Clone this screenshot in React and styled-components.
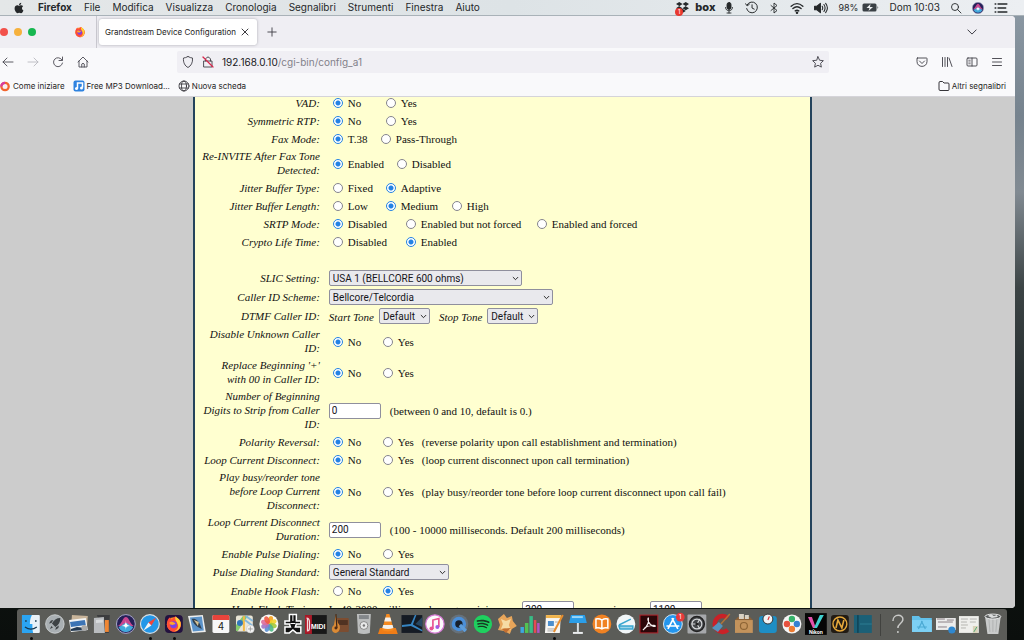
import React from "react";
import styled, { createGlobalStyle } from "styled-components";
import { FaApple, FaDropbox, FaSpotify } from "react-icons/fa";

const ui = `Inter, Roboto, "Liberation Sans", sans-serif`;
const control = `Roboto, "Liberation Sans", sans-serif`;
const serif = `"Liberation Serif", "Times New Roman", serif`;

const menus = [
  "File",
  "Modifica",
  "Visualizza",
  "Cronologia",
  "Segnalibri",
  "Strumenti",
  "Finestra",
  "Aiuto"
];

// a radio option is [label, width of its slot]
const rows = [
  { label: "VAD:", options: [["No", 53], ["Yes"]], on: 0 },
  { label: "Symmetric RTP:", options: [["No", 53], ["Yes"]], on: 0 },
  { label: "Fax Mode:", options: [["T.38", 48], ["Pass-Through"]], on: 0 },
  {
    label: "Re-INVITE After Fax Tone Detected:",
    options: [["Enabled", 64], ["Disabled"]],
    on: 0
  },
  { label: "Jitter Buffer Type:", options: [["Fixed", 53], ["Adaptive"]], on: 1 },
  {
    label: "Jitter Buffer Length:",
    options: [["Low", 53], ["Medium", 66], ["High"]],
    on: 1
  },
  {
    label: "SRTP Mode:",
    options: [
      ["Disabled", 73],
      ["Enabled but not forced", 131],
      ["Enabled and forced"]
    ],
    on: 0
  },
  { label: "Crypto Life Time:", options: [["Disabled", 73], ["Enabled"]], on: 1 },
  { blank: true },
  { label: "SLIC Setting:", select: "USA 1 (BELLCORE 600 ohms)", width: 193 },
  { label: "Caller ID Scheme:", select: "Bellcore/Telcordia", width: 224 },
  { label: "DTMF Caller ID:", tones: ["Start Tone", "Stop Tone"] },
  { label: "Disable Unknown Caller\nID:", options: [["No", 50], ["Yes"]], on: 0 },
  {
    label: "Replace Beginning '+'\nwith 00 in Caller ID:",
    options: [["No", 50], ["Yes"]],
    on: 0
  },
  {
    label: "Number of Beginning\nDigits to Strip from Caller\nID:",
    input: "0",
    note: "(between 0 and 10, default is 0.)"
  },
  {
    label: "Polarity Reversal:",
    options: [["No", 50], ["Yes", 39]],
    on: 0,
    note: "(reverse polarity upon call establishment and termination)"
  },
  {
    label: "Loop Current Disconnect:",
    options: [["No", 50], ["Yes", 39]],
    on: 0,
    note: "(loop current disconnect upon call termination)"
  },
  {
    label: "Play busy/reorder tone\nbefore Loop Current\nDisconnect:",
    options: [["No", 50], ["Yes", 39]],
    on: 0,
    note: "(play busy/reorder tone before loop current disconnect upon call fail)"
  },
  {
    label: "Loop Current Disconnect\nDuration:",
    input: "200",
    note: "(100 - 10000 milliseconds. Default 200 milliseconds)"
  },
  { label: "Enable Pulse Dialing:", options: [["No", 50], ["Yes"]], on: 0 },
  { label: "Pulse Dialing Standard:", select: "General Standard", width: 120 },
  { label: "Enable Hook Flash:", options: [["No", 50], ["Yes"]], on: 1 },
  { label: "Hook Flash Timing:", timing: true }
];

const Line = ({ size = 12, w = 1.8, children, ...rest }) => (
  <svg
    width={size}
    height={size}
    viewBox="0 0 24 24"
    fill="none"
    stroke="currentColor"
    strokeWidth={w}
    strokeLinecap="round"
    strokeLinejoin="round"
    aria-hidden="true"
    {...rest}
  >
    {children}
  </svg>
);

const FirefoxArt = () => (
  <g>
    <circle cx="12" cy="12.5" r="9.5" fill="#ff8a1f" />
    <path d="M3 10C3 7 5 4 7 3c0 2 1 3 2 3 2-1 3-4 6-4 0 2 3 3 5 6 3 5 1 12-5 14C9 24 3 19 3 14z" fill="#ff4b3a" />
    <path d="M14 2c4 2 8 6 7 12-1 5-5 8-9 8 5-2 7-6 5-10-1-3-4-5-3-10z" fill="#ffcf35" />
    <circle cx="11.5" cy="13" r="4.6" fill="#7b42e6" />
    <path d="M6 10c2-2 5-1 6 0 1 0 2 1 2 2-2 0-3 2-5 1-2 0-3-1-3-3z" fill="#ffa52b" />
  </g>
);

const Gear = () => (
  <g>
    <rect x="2.500" y="2.500" width="19" height="19" rx="1" fill="#a6a8ab" />
    <circle cx="12" cy="12" r="7.500" fill="#44474a" stroke="#222" strokeWidth="1.500" />
    <circle cx="12" cy="12" r="5" fill="none" stroke="#d5d7d9" strokeWidth="1.200" />
    <path d="M12 12H6.500M12 12l3-5M12 12l3 5" stroke="#d5d7d9" strokeWidth="1.200" />
    <circle cx="12" cy="12" r="1.600" fill="#222" />
  </g>
);

const dock = [
  {
    name: "Finder",
    run: true,
    art: (
      <g>
        <rect x="3" y="3" width="18" height="18" rx="1" fill="#e8f1f8" />
        <path d="M3 3h10c-2 4-2 7-2 9h2.500c0 3 0 6 .8 9H3z" fill="#2ba4f2" />
        <path d="M7 8v2M17 8v2M6 15c4 3 8 3 12 0" stroke="#17384f" strokeWidth="1.200" fill="none" />
      </g>
    )
  },
  {
    name: "Launchpad",
    art: (
      <g>
        <circle cx="12" cy="12" r="9.300" fill="#a9afb3" stroke="#c9cdcf" />
        <path d="M17.500 6c-4 0-6.500 2-8.500 5.500l3.500 3.500c3.500-2 5-5 5-9zM8.500 11l-2.500.5 2-3 2.500-.5zM13 15.500l-.5 2.500 3-2 .5-2.500zM8.500 14l1.500 1.500-3 1.500z" fill="#3d4245" />
      </g>
    )
  },
  {
    name: "Anteprima documenti",
    art: (
      <g>
        <path d="M5 3l16 1-1 13-16-1z" fill="#c8b49a" />
        <path d="M2 8l17-2 2 12-17 2z" fill="#f2f4f5" />
        <path d="M3 10l15-2 1 5-15 2z" fill="#3c74b5" />
        <path d="M4 17l6-2 9 1 1 2-16 1z" fill="#253a52" />
        <circle cx="17.500" cy="16" r="3" fill="#aaa" />
      </g>
    )
  },
  {
    name: "Calcolatrice",
    art: (
      <g>
        <path d="M7 3h13l-1 18h-6z" fill="#3c3d3f" />
        <path d="M15 8h4v12h-4z" fill="#f08733" />
        <path d="M4 6l10-1 1 16-11 0z" fill="#b9bcbf" />
        <path d="M6 8l7-.5v3L6 11z" fill="#d7dadc" />
      </g>
    )
  },
  {
    name: "Siri",
    art: (
      <g>
        <circle cx="12" cy="12" r="9.500" fill="#262058" stroke="#a8a7c8" />
        <path d="M4 14c4-2 5-9 8-9s4 7 8 9c-5 0-6 2-8 2s-4-2-8-2z" fill="#c9468f" />
        <path d="M4.500 15c4-1 5-4 7.500-4s4 3 7.500 4c-2 4-5 5-7.500 5s-5.500-1-7.500-5z" fill="#42a8dc" />
        <path d="M12 8c0 4 1 5 4 6-3 0-4 1-4 4 0-3-1-4-4-4 3-1 4-2 4-6z" fill="#fff" />
      </g>
    )
  },
  {
    name: "Safari",
    run: true,
    art: (
      <g>
        <circle cx="12" cy="12" r="9.500" fill="#2397e8" stroke="#d9dee2" strokeWidth="1.200" />
        <path d="M18.500 5.500l-5 8-3-3z" fill="#f0453a" />
        <path d="M5.500 18.500l5-8 3 3z" fill="#f3f5f6" />
      </g>
    )
  },
  {
    name: "Firefox",
    run: true,
    art: (
      <g>
        <rect x="3" y="3" width="18" height="18" rx="4" fill="#23123f" />
        <g transform="translate(3 3) scale(.75)">
          <FirefoxArt />
        </g>
      </g>
    )
  },
  {
    name: "Mail",
    art: (
      <g>
        <path d="M3 4l15-1 3 17-14 1z" fill="#eceeee" />
        <path d="M5 5.500l12-1 2 14-11 1z" fill="#5b93c9" />
        <path d="M7 7c4-1 6 2 8 5l2 5-4-2c-3-2-5-4-6-8z" fill="#31404e" />
        <path d="M9 8l5 2-1 4z" fill="#d6c294" />
      </g>
    )
  },
  {
    name: "Calendario",
    art: (
      <g>
        <rect x="3.500" y="3" width="17" height="18" rx="1.500" fill="#f7f7f7" />
        <path d="M3.500 8V4.500Q3.500 3 5 3h14q1.500 0 1.500 1.500V8z" fill="#e8443c" />
        <text x="12" y="18" fontSize="10" textAnchor="middle" fill="#222" fontFamily="Inter">
          4
        </text>
      </g>
    )
  },
  {
    name: "Mappe",
    art: (
      <g>
        <rect x="3" y="3.500" width="17" height="16" rx="2" fill="#e9e5d6" />
        <path d="M3 13l7-9h5L5 19H3z" fill="#86c96f" />
        <path d="M10 19V4h2v15z" fill="#f3b949" />
        <path d="M12 8l8 6M13 4l7 5" stroke="#85b8dd" strokeWidth="2" />
        <circle cx="7" cy="11" r="3" fill="#3176bd" />
        <circle cx="17.500" cy="17" r="4" fill="#f4f4f4" stroke="#bbb" strokeWidth=".5" />
        <path d="M17.500 14.500v5M15 17h5" stroke="#888" strokeWidth=".7" />
      </g>
    )
  },
  {
    name: "Foto",
    art: (
      <g>
        <circle cx="12" cy="12" r="9.600" fill="#fafafa" />
        {["#f6a21c", "#f2d32b", "#a3ca3d", "#4fb783", "#5b8fd3", "#a175c4", "#dd6d9b", "#ef5a45"].map((c, i) => (
          <ellipse key={c} cx="12" cy="7.700" rx="2.500" ry="4" fill={c} opacity=".9" transform={`rotate(${i * 45 + 20} 12 12)`} />
        ))}
      </g>
    )
  },
  {
    name: "Microfono",
    art: (
      <g>
        <path
          d="M8.500 2.500h7V9H20v3h-4.500l-1 3H20v6h-4.500L12 18l-3.500 3H4v-6h5.500l-1-3H4V9h4.500z"
          fill="#111"
          stroke="#fff"
          strokeWidth="1.500"
        />
        <path d="M12 3v6M9.500 11.500h5" stroke="#fff" />
      </g>
    )
  },
  {
    name: "MIDI",
    art: (
      <g>
        <rect x="1" y="3" width="22" height="19" fill="#181818" />
        <path d="M1 3h7v19H1z" fill="#ad1a28" />
        <path d="M2.500 6q3 0 3 4v6q0 3-2 3V6" fill="none" stroke="#f2dadd" strokeWidth="1.200" />
        <text x="7" y="17" fontSize="7" fontWeight="700" fill="#fff" fontFamily="Liberation Sans">
          MIDI
        </text>
      </g>
    )
  },
  {
    name: "GarageBand",
    art: (
      <g>
        <rect x="8" y="6" width="13" height="14" rx="1" fill="#7c4d31" />
        <path d="M9 8h11v5H9z" fill="#503222" />
        <path d="M8 2l2 9c3 2 3 9-2 10-5 0-5-6-2-8z" fill="#d98a35" />
        <path d="M8 2l1 14" stroke="#3b2418" strokeWidth="1.200" />
        <circle cx="8" cy="16" r="1.500" fill="#4f2c18" />
      </g>
    )
  },
  {
    name: "DVD",
    art: (
      <g>
        <path d="M5 2h14l-1 19q-6 2-12 0z" fill="#bcbebe" />
        <path d="M7 3h10v4H7z" fill="#83878a" />
        <circle cx="12" cy="13.500" r="4" fill="#e8e9e9" stroke="#888" />
        <circle cx="12" cy="13.500" r="1.200" fill="#777" />
      </g>
    )
  },
  {
    name: "VLC",
    art: (
      <g>
        <path d="M4 16h16l2 6H2z" fill="#ef7d17" />
        <path d="M10.500 2h3L18 18q-6 3-12 0z" fill="#f58a20" />
        <path d="M9.500 5.500h5l1.200 4H8.300zM7.300 13h9.400l.9 3q-5.500 2-11.200 0z" fill="#f3f0ec" />
      </g>
    )
  },
  {
    name: "Montaggio",
    art: (
      <g>
        <rect x="1.500" y="3" width="21" height="18" fill="#151b24" />
        <path d="M2 13l9-1 4-9h1.500l-3.500 9.500 9.500 5.500v1.500L11 14 2 15z" fill="#3685c3" />
        <path d="M22.500 5l-7 7 7 3z" fill="#274762" />
      </g>
    )
  },
  {
    name: "Musica",
    art: (
      <g>
        <circle cx="12" cy="12" r="9.300" fill="#fbfbfb" stroke="#d579d4" strokeWidth="1.200" />
        <path d="M10 17V8l6-1.500v8.500" stroke="#e85492" strokeWidth="1.700" fill="none" />
        <circle cx="8.500" cy="16.500" r="2" fill="#e85492" />
        <circle cx="14.500" cy="15" r="2" fill="#a35be0" />
      </g>
    )
  },
  {
    name: "QuickTime",
    art: (
      <g>
        <circle cx="12" cy="12" r="9.500" fill="#66717b" />
        <circle cx="12" cy="12" r="5.500" fill="#17202d" stroke="#4b8fd8" strokeWidth="3.600" />
        <path d="M13 13l6 6" stroke="#5d9ddb" strokeWidth="3.400" />
      </g>
    )
  },
  {
    name: "Spotify",
    art: (
      <g>
        <circle cx="12" cy="12" r="8" fill="#173a22" />
        <FaSpotify x="2.500" y="2.500" size="19" color="#1fd05f" />
      </g>
    )
  },
  {
    name: "Automazione",
    art: (
      <g>
        <path d="M3 7l6-5 3 4 5-2 1 5 4 5-5 3-2 5-6-3-6-1 2-5z" fill="#e7a55a" />
        <path d="M6 7l5 2 5-2-2 6 2 5-6-2-4 1 2-5z" fill="#f6dba4" />
        <path d="M7 17l4 4 5-5z" fill="#c36f31" />
      </g>
    )
  },
  {
    name: "Numbers",
    art: (
      <g>
        <path d="M2.500 15h3.500v6H2.500z" fill="#3ea6df" />
        <path d="M7 11h3.500v10H7z" fill="#52c353" />
        <path d="M11.500 4H15v17h-3.500z" fill="#38bd86" />
        <path d="M16 8h2.500v13H16z" fill="#e44b52" />
        <path d="M19.300 11h2.500v10h-2.500z" fill="#af56c5" />
      </g>
    )
  },
  {
    name: "Pages",
    run: true,
    art: (
      <g>
        <path d="M4 3h15l-1 18H3z" fill="#f7f6f2" />
        <path d="M4 3h15v3H4z" fill="#efb24a" />
        <path d="M6 9h6v5H6z" fill="#4c8fcd" />
        <path d="M5.500 17h8M5.500 19h7M13 10h3" stroke="#aaa" />
        <path d="M21 3L12 20" stroke="#e88d2d" strokeWidth="2" />
      </g>
    )
  },
  {
    name: "Keynote",
    art: (
      <g>
        <path d="M5 3h14l2 8H3z" fill="#2b9ee8" />
        <path d="M6 4h11v2H6z" fill="#99d5f6" />
        <path d="M11 11h2v9h-2z" fill="#d8dddf" />
        <path d="M7 20h10v2H7z" fill="#eceeef" />
      </g>
    )
  },
  {
    name: "Libri",
    art: (
      <g>
        <circle cx="12" cy="12" r="9.500" fill="#f08223" />
        <path d="M12 8q-3-2-6-1v9q3-1 6 1 3-2 6-1V7q-3-1-6 1v9" fill="none" stroke="#fff" strokeWidth="1.500" />
      </g>
    )
  },
  {
    name: "Scanner",
    art: (
      <g>
        <circle cx="12" cy="12" r="9.500" fill="#f1f6f8" />
        <path d="M5 13l12-6M5 14h14v3H6z" stroke="#3aa6cf" strokeWidth="1.500" fill="#9ad3e8" />
      </g>
    )
  },
  {
    name: "Acrobat",
    art: (
      <g>
        <rect x="3" y="3" width="18" height="18" fill="#2b0709" stroke="#b3242b" />
        <path d="M6 18c4-3 6-8 5.500-12-1 0-.5 4 2 6.500 2 2 5 2.500 5 1.500s-7-1-11 2" fill="none" stroke="#f4eeee" strokeWidth="1.200" />
      </g>
    )
  },
  {
    name: "App Store",
    art: (
      <g>
        <circle cx="12" cy="12" r="9.500" fill="#2496ee" stroke="#d7e5ef" />
        <path d="M12.800 6L7 17M11 6l6 11M5.500 14h13" stroke="#fff" strokeWidth="1.700" />
        <circle cx="19.500" cy="5" r="4.400" fill="#e63a3c" />
        <text x="19.500" y="7" fontSize="6" textAnchor="middle" fill="#fff" fontFamily="Inter">
          1
        </text>
      </g>
    )
  },
  { name: "Preferenze", art: <Gear /> },
  {
    name: "CCleaner",
    art: (
      <g>
        <path d="M19 6a8 8 0 1 0 0 12" fill="none" stroke="#c92127" strokeWidth="4.500" />
        <path d="M21 2l-9 10" stroke="#b27438" strokeWidth="1.500" />
        <path d="M10 10l4 4-5 6-6-4z" fill="#5593bd" />
      </g>
    )
  },
  {
    name: "Scatola",
    art: (
      <g>
        <path d="M3 8h18v13H3z" fill="#c3935c" />
        <path d="M3 8l3-3h12l3 3z" fill="#8a6139" />
        <path d="M7 2h5v5H7zM13 3h4v4h-4z" fill="#d9d2c4" />
        <circle cx="12" cy="14" r="3.500" fill="none" stroke="#8d6435" strokeWidth="1.200" />
      </g>
    )
  },
  {
    name: "Bilancia",
    art: (
      <g>
        <rect x="3" y="4" width="18" height="17" rx="3" fill="#1e8ec4" />
        <circle cx="12" cy="7" r="5" fill="#f1f3f4" stroke="#333" />
        <path d="M12 8l1.500-3.500" stroke="#d33" strokeWidth="1.200" />
      </g>
    )
  },
  {
    name: "Colori",
    art: (
      <g>
        <circle cx="12" cy="12" r="9.600" fill="#f5f5f5" />
        <circle cx="12" cy="7" r="3.200" fill="#37b26b" />
        <circle cx="7" cy="12" r="3.200" fill="#e6513e" />
        <circle cx="17" cy="12" r="3.200" fill="#3581d1" />
        <circle cx="12" cy="17" r="3.200" fill="#ec7b31" />
      </g>
    )
  },
  {
    name: "Nikon",
    art: (
      <g>
        <rect x="1" y="1" width="22" height="22" fill="#060606" />
        <path d="M4 5h4l4 11h-3z" fill="#e253ac" />
        <path d="M20 3h-4l-6 13h3z" fill="#3fd0cf" />
        <text x="12" y="22" fontSize="5" fontWeight="700" textAnchor="middle" fill="#fff" fontFamily="Inter">
          Nikon
        </text>
      </g>
    )
  },
  {
    name: "Nota",
    art: (
      <g>
        <rect x="3" y="3" width="18" height="18" rx="3" fill="#211b14" />
        <circle cx="12" cy="12" r="7" fill="none" stroke="#e5a83b" strokeWidth="1.400" />
        <path d="M8 16l2-8 4 8 2-8" fill="none" stroke="#e5a83b" strokeWidth="1.600" />
      </g>
    )
  },
  {
    name: "Taccuino",
    art: (
      <g>
        <rect x="3" y="3" width="18" height="18" fill="#1b6077" />
        <path d="M7 3v18" stroke="#0b3443" />
        <path d="M9 12h12" stroke="#2e7d93" />
      </g>
    )
  },
  { name: "sep" },
  {
    name: "Aiuto",
    art: (
      <path d="M7 9c0-8 11-7 10-1-1 4-5 4-5 8M12 19v2" fill="none" stroke="#c9cac8" strokeWidth="1.500" />
    )
  },
  {
    name: "Applicazioni",
    art: (
      <g>
        <path d="M2 4h7l2 2h11v14H2z" fill="#62c0ea" />
        <path d="M2 8h20v12H2z" fill="#7dd0f4" />
        <path d="M12.500 9L8.500 17M11.500 9l4 8M7 15h10" stroke="#4ba9d3" strokeWidth="1.200" />
      </g>
    )
  },
  {
    name: "Documento",
    art: (
      <g>
        <path d="M2 6h20v12H2z" fill="#ececec" />
        <path d="M3 7h8M4 10h15M13 8h7M4 15h9" stroke="#8b7f86" />
        <circle cx="18" cy="18" r="3.600" fill="#2f88d0" />
      </g>
    )
  },
  {
    name: "Pagina",
    art: (
      <g>
        <path d="M2 4h20v17H2z" fill="#efefec" />
        <path d="M4 7h7M4 10h6M4 13h7M4 16h5M13 7h7M13 10h6" stroke="#b5b5b0" />
        <path d="M16 14h5v7h-5z" fill="#d8d2b8" />
        <path d="M20 15l-3 5" stroke="#5a7" />
      </g>
    )
  },
  {
    name: "Cestino",
    art: (
      <g>
        <path d="M4 4h16l-2.500 18h-11z" fill="#c9cbcb" />
        <path d="M8 7l1 13M12 7v13M16 7l-1 13" stroke="#b0b3b3" />
        <ellipse cx="12" cy="4.500" rx="8" ry="2.500" fill="#5a5d5d" stroke="#e6e7e7" />
        <path d="M7 4l3-2 3 2 3-1 1 2-6 1z" fill="#dadcdc" />
      </g>
    )
  }
];

const Select = ({ value, width, label }) => (
  <ScSelect $width={width}>
    <select aria-label={label} defaultValue={value}>
      <option>{value}</option>
    </select>
    <Line size={7} w={3}>
      <path d="M4 8l8 8 8-8" />
    </Line>
  </ScSelect>
);

const Field = ({ row }) => {
  if (row.options) {
    return (
      <ScValue role="radiogroup" aria-label={row.label}>
        {row.options.map(([text, width], i) => (
          <ScOption key={text} $width={width}>
            <ScRadio name={row.label} defaultChecked={row.on === i} />
            {text}
          </ScOption>
        ))}
        {row.note}
      </ScValue>
    );
  }
  if (row.select) {
    return (
      <ScValue>
        <Select value={row.select} width={row.width} label={row.label} />
      </ScValue>
    );
  }
  if (row.tones) {
    return (
      <ScValue>
        {row.tones.map(tone => (
          <ScTone key={tone}>
            {tone}
            <Select value="Default" width={51} label={tone} />
          </ScTone>
        ))}
      </ScValue>
    );
  }
  if (row.timing) {
    return (
      <ScValue>
        <ScTiming>
          In 40-2000 milliseconds range, minimum:
          <ScInput defaultValue="300" />
        </ScTiming>
        <ScTiming>
          maximum:
          <ScInput defaultValue="1100" />
        </ScTiming>
      </ScValue>
    );
  }
  return (
    <ScValue>
      <ScInput aria-label={row.label} defaultValue={row.input} />
      <ScNote>{row.note}</ScNote>
    </ScValue>
  );
};

const MenuBar = () => (
  <ScMenuBar>
    <ScMenus>
      <FaApple size={12} />
      <b>Firefox</b>
      {menus.map(m => (
        <span key={m}>{m}</span>
      ))}
    </ScMenus>
    <ScStatus>
      <ScBadged>
        <FaDropbox size={13} />
        <i>1</i>
      </ScBadged>
      <strong>box</strong>
      <Line size={12}>
        <rect x="8" y="1" width="8" height="14" rx="4" fill="currentColor" />
        <path d="M5 11c0 9 14 9 14 0M12 18v4M8 22h8" />
      </Line>
      <Line size={13}>
        <path d="M4 7a10 10 0 1 1-1 7M1 5l3 4 4-3M13 7v6l4 2" />
      </Line>
      <Line size={12}>
        <path d="M6 7l12 10-6 5V2l6 5L6 17" />
      </Line>
      <Line size={14} w={2.4}>
        <path d="M2 9q10-9 20 0M5 13q7-6 14 0M9 17q3-2 6 0" />
        <circle cx="12" cy="20" r="1" fill="currentColor" />
      </Line>
      <Line size={14}>
        <path d="M1 9h4l6-5v16l-6-5H1z" fill="currentColor" />
        <path d="M14 9q2 3 0 6M17 6q4 6 0 12M20 4q6 8 0 16" />
      </Line>
      <ScBattery>
        98%
        <svg width="17" height="9" viewBox="0 0 34 18" aria-hidden="true">
          <rect x="1" y="1" width="28" height="16" rx="3" fill="#3a4045" />
          <path d="M31 6q3 3 0 6z" fill="#3a4045" />
          <path d="M17 2l-8 8h6l-2 6 9-8h-6z" fill="#eef1f3" />
        </svg>
      </ScBattery>
      <time>Dom 10:03</time>
      <Line size={12}>
        <circle cx="10" cy="10" r="7" />
        <path d="M15 15l7 7" />
      </Line>
      <svg width="12" height="12" viewBox="2 2 20 20" aria-hidden="true">
        {dock[4].art}
      </svg>
      <Line size={14} w={2.6}>
        <path d="M7 5h15M7 12h13M7 19h15M2 5h1M2 12h1M2 19h1" />
      </Line>
    </ScStatus>
  </ScMenuBar>
);

const Chrome = () => (
  <>
    <ScTabs>
      <ScLights>
        <i />
        <i />
        <i />
      </ScLights>
      <ScPinned>
        <svg width="12" height="12" viewBox="0 0 24 24" aria-hidden="true">
          <FirefoxArt />
        </svg>
      </ScPinned>
      <ScTab>
        Grandstream Device Configuration
        <ScIconButton aria-label="Chiudi scheda">
          <Line size={8} w={2.6}>
            <path d="M3 3l18 18M21 3L3 21" />
          </Line>
        </ScIconButton>
      </ScTab>
      <ScIconButton aria-label="Nuova scheda">
        <Line size={10} w={2.2}>
          <path d="M12 2v20M2 12h20" />
        </Line>
      </ScIconButton>
      <ScAllTabs aria-label="Elenca schede">
        <Line size={10} w={2.4}>
          <path d="M2 7l10 10L22 7" />
        </Line>
      </ScAllTabs>
    </ScTabs>
    <ScNav>
      <ScNavButtons>
        <ScIconButton aria-label="Indietro">
          <Line>
            <path d="M22 12H2M10 4l-8 8 8 8" />
          </Line>
        </ScIconButton>
        <ScIconButton aria-label="Avanti" disabled>
          <Line>
            <path d="M2 12h20M14 4l8 8-8 8" />
          </Line>
        </ScIconButton>
        <ScIconButton aria-label="Ricarica">
          <Line>
            <path d="M20 8a9 9 0 1 0 1 6M21 2v7h-7" />
          </Line>
        </ScIconButton>
        <ScIconButton aria-label="Home">
          <Line>
            <path d="M2 12L12 2l10 10M4 10v12h16V10M9.500 22v-6q2.500-3 5 0v6" />
          </Line>
        </ScIconButton>
      </ScNavButtons>
      <ScUrl>
        <Line>
          <path d="M12 1q5 3 9 3c1 9-3 16-9 19C6 20 2 13 3 4q4 0 9-3z" />
        </Line>
        <Line>
          <path d="M4 10h16v12H4zM7 10V6q5-8 10 0v4" />
          <path d="M2 2l20 20" stroke="#d7264c" strokeWidth="2.400" />
        </Line>
        <p>
          192.168.0.10<span>/cgi-bin/config_a1</span>
        </p>
        <ScIconButton aria-label="Aggiungi ai segnalibri">
          <Line>
            <path d="M12 1.500l3.200 7 7.500.9-5.500 5.200 1.500 7.600L12 18.500l-6.700 3.700 1.500-7.600L1.300 9.400l7.500-.9z" />
          </Line>
        </ScIconButton>
      </ScUrl>
      <ScTools>
        <ScIconButton aria-label="Pocket">
          <Line>
            <path d="M3 4h18q1 0 1 1v6c0 13-20 13-20 0V5q0-1 1-1zM7 10l5 5 5-5" />
          </Line>
        </ScIconButton>
        <ScIconButton aria-label="Libreria">
          <Line>
            <path d="M3 3v18M8 3v18M13 3v18M16 4l6 17" />
          </Line>
        </ScIconButton>
        <ScIconButton aria-label="Barra laterale">
          <Line>
            <path d="M4 4h16q2 0 2 2v12q0 2-2 2H4q-2 0-2-2V6q0-2 2-2zM12 4v16" />
            <path d="M5.500 8.500h3M5.500 12h3M5.500 15.500h3" strokeWidth="1.400" />
          </Line>
        </ScIconButton>
        <ScIconButton aria-label="Menu">
          <Line>
            <path d="M3 5h18M3 12h18M3 19h18" />
          </Line>
        </ScIconButton>
      </ScTools>
    </ScNav>
    <ScBookmarks>
      <a href="#start">
        <svg width="11" height="11" viewBox="2 0 22 24" aria-hidden="true">
          <circle cx="12" cy="12" r="8" fill="#f7eef2" stroke="#f2662f" strokeWidth="5" />
          <path d="M4 12a8 8 0 0 1 8-8" fill="none" stroke="#d63ba0" strokeWidth="5" />
        </svg>
        Come iniziare
      </a>
      <a href="#mp3">
        <svg width="12" height="12" viewBox="0 0 24 24" aria-hidden="true">
          <rect x="1" y="1" width="22" height="22" rx="4" fill="#2f83e0" />
          <path d="M9 17V6h10v9" stroke="#fff" strokeWidth="3" fill="none" />
          <circle cx="7" cy="17" r="3" fill="#fff" />
          <circle cx="17" cy="16" r="3" fill="#fff" />
        </svg>
        Free MP3 Download...
      </a>
      <a href="#new">
        <Line size={12} w={1.5}>
          <circle cx="12" cy="12" r="10" />
          <ellipse cx="12" cy="12" rx="5" ry="10" />
          <path d="M3 8h18M3 16h18" />
        </Line>
        Nuova scheda
      </a>
      <a href="#other">
        <Line size={12}>
          <path d="M2 5q0-2 2-2h5l3 3h8q2 0 2 2v11q0 2-2 2H4q-2 0-2-2z" />
        </Line>
        Altri segnalibri
      </a>
    </ScBookmarks>
  </>
);

const App = () => {
  return (
    <ScDesktop>
      <GlobalStyle />
      <MenuBar />
      <ScWindow>
        <Chrome />
        <ScPage>
          <ScForm>
            {rows.map((row, i) => (
              <ScRow key={i}>
                {!row.blank && (
                  <>
                    <ScLabel>{row.label}</ScLabel>
                    <Field row={row} />
                  </>
                )}
              </ScRow>
            ))}
          </ScForm>
        </ScPage>
      </ScWindow>
      <ScDock>
        {dock.map(item =>
          item.art ? (
            <ScDockItem key={item.name} $run={item.run}>
              <svg viewBox="0 0 24 24" role="img" aria-label={item.name}>
                {item.art}
              </svg>
            </ScDockItem>
          ) : (
            <ScDockLine key={item.name} />
          )
        )}
      </ScDock>
    </ScDesktop>
  );
};

export default App;

const GlobalStyle = createGlobalStyle`
  * {
    box-sizing: border-box;
  }
  body {
    margin: 0;
    overflow: hidden;
  }
  svg {
    display: block;
    flex: none;
  }
`;

const ScDesktop = styled.div`
  display: flex;
  flex-direction: column;
  height: 100vh;
  background: linear-gradient(
    #8d9aa5 0%,
    #76838e 18%,
    #818a92 30%,
    #3c4445 45%,
    #20282a 65%,
    #0d1310 85%,
    #0b0f0d 100%
  );
  font-family: ${ui};
`;

const ScMenuBar = styled.header`
  display: flex;
  justify-content: space-between;
  align-items: center;
  height: 16px;
  flex: none;
  padding: 0 16px 0 13px;
  background: linear-gradient(90deg, #e4e7e8, #dde3e6 50%, #eceff2);
  border-bottom: 1px solid #a9b2b8;
  color: #25282a;
  font-size: 10px;
  line-height: 15px;
`;

const ScMenus = styled.nav`
  display: flex;
  align-items: center;
  gap: 12px;

  b {
    margin-left: 1px;
  }
`;

const ScStatus = styled.div`
  display: flex;
  align-items: center;
  gap: 10px;

  strong {
    font-size: 11px;
    font-weight: 800;
    margin: 0 -2px 0 -4px;
  }
`;

const ScBadged = styled.span`
  position: relative;

  i {
    position: absolute;
    left: -1px;
    bottom: -2px;
    width: 8px;
    height: 8px;
    border-radius: 50%;
    background: #e8382f;
    color: #fff;
    font-size: 6px;
    font-style: normal;
    line-height: 8px;
    text-align: center;
  }
`;

const ScBattery = styled.span`
  display: flex;
  align-items: center;
  gap: 4px;
  font-size: 9px;
`;

const ScWindow = styled.main`
  display: flex;
  flex-direction: column;
  flex: 1;
  min-height: 0;
  margin-right: 9px;
  border-radius: 0 4px 4px 0;
  overflow: hidden;
  background: #f9f9fb;
  color: #3f3e46;
`;

const ScIconButton = styled.button`
  display: flex;
  padding: 0;
  border: 0;
  background: none;
  color: inherit;

  &:disabled {
    color: #b9b9bf;
  }
`;

const ScTabs = styled.div`
  display: flex;
  align-items: center;
  height: 32px;
  flex: none;
  background: #efeef3;
`;

const ScLights = styled.div`
  display: flex;
  gap: 6px;
  width: 74px;

  i {
    width: 8px;
    height: 8px;
    border-radius: 50%;
    background: #f2514b;
  }
  i:nth-child(2) {
    background: #f6b13d;
  }
  i:nth-child(3) {
    background: #17b750;
  }
`;

const ScPinned = styled.div`
  display: flex;
  align-items: center;
  width: 23px;
  height: 32px;
  border-right: 1px solid #c9c8cf;
`;

const ScTab = styled.div`
  display: flex;
  align-items: center;
  justify-content: space-between;
  width: 158px;
  height: 26px;
  margin: 0 10px 0 2px;
  padding: 0 8px 0 6px;
  border-radius: 3px;
  background: #fff;
  box-shadow: 0 0 3px #a9a8b0;
  color: #1d1c22;
  font-size: 8px;
  white-space: nowrap;
`;

const ScAllTabs = styled(ScIconButton)`
  margin: 0 38px 0 auto;
`;

const ScNav = styled.div`
  display: flex;
  align-items: center;
  height: 28px;
  flex: none;
`;

const ScNavButtons = styled.div`
  display: flex;
  gap: 13px;
  padding-left: 2px;
  width: 177px;
  color: #4b4a52;
`;

const ScUrl = styled.div`
  display: flex;
  align-items: center;
  gap: 8px;
  flex: 1;
  height: 22px;
  padding: 0 5px;
  border-radius: 2px;
  background: #f0eff4;
  font-size: 10px;

  p {
    flex: 1;
    margin: 0;
    color: #17161b;
  }
  span {
    color: #82818a;
  }
`;

const ScTools = styled.div`
  display: flex;
  justify-content: flex-end;
  gap: 13px;
  width: 186px;
  padding-right: 12px;
`;

const ScBookmarks = styled.div`
  display: flex;
  align-items: center;
  gap: 8px;
  height: 21px;
  flex: none;
  padding: 0 9px 0 0;
  border-bottom: 1px solid #d5d4d9;
  font-size: 8px;

  a {
    display: flex;
    align-items: center;
    gap: 2px;
    color: #1f1e24;
    text-decoration: none;
  }
  a:last-child {
    margin-left: auto;
  }
`;

const ScPage = styled.section`
  flex: 1;
  min-height: 0;
  overflow: hidden;
  padding: 0 20% 0 19%;
  background: #cccccc;
`;

const ScForm = styled.form`
  margin-top: -5px;
  border: 2px solid #24435c;
  background: #ffffd0;
  color: #111;
  font-family: ${serif};
  font-size: 11px;
  line-height: 14px;
`;

const ScRow = styled.div`
  display: grid;
  grid-template-columns: 125px 1fr;
  align-items: center;
  gap: 9px;
  min-height: 18px;
`;

const ScLabel = styled.div`
  padding: 1px 0 2px;
  font-style: italic;
  text-align: right;
  white-space: pre-line;
`;

const ScValue = styled.div`
  display: flex;
  align-items: center;
  white-space: nowrap;
`;

const ScOption = styled.label`
  display: flex;
  align-items: center;
  gap: 5px;
  width: ${props => (props.$width ? `${props.$width}px` : "auto")};

  &:first-child {
    margin-left: 4px;
  }
`;

const ScRadio = styled.input.attrs({ type: "radio" })`
  appearance: none;
  width: 10px;
  height: 10px;
  margin: 0;
  border: 1px solid #85848c;
  border-radius: 50%;
  background: #fff;

  &:checked {
    border-color: #2382e4;
    background: radial-gradient(circle, #2382e4 0 2px, #fff 3px);
  }
`;

const ScSelect = styled.span`
  position: relative;
  display: flex;
  width: ${props => props.$width}px;
  padding: 1px 0 2px;

  select {
    appearance: none;
    width: 100%;
    height: 16px;
    padding: 0 3px;
    border: 1px solid #8f8f9d;
    border-radius: 2px;
    background: #e9e9ed;
    color: #16151a;
    font-family: ${control};
    font-size: 10px;
  }
  svg {
    position: absolute;
    right: 3px;
    top: 6px;
    pointer-events: none;
  }
`;

const ScTone = styled.label`
  display: flex;
  align-items: center;
  gap: 5px;
  margin-right: 9px;
  font-style: italic;
`;

const ScInput = styled.input`
  width: 52px;
  height: 16px;
  padding: 0 2px;
  border: 1px solid #8f8f9d;
  border-radius: 2px;
  background: #fff;
  color: #16151a;
  font-family: ${control};
  font-size: 10px;
`;

const ScNote = styled.span`
  margin-left: 9px;
`;

const ScTiming = styled.label`
  display: flex;
  align-items: center;
  gap: 8px;
  margin-right: 20px;
`;

const ScDock = styled.footer`
  display: flex;
  align-items: center;
  height: 31px;
  flex: none;
  margin: 1px 17px 0;
  padding: 0 2px;
  border-radius: 3px 3px 0 0;
  background: #5b5c58;
`;

const ScDockItem = styled.div`
  position: relative;
  flex: 1;
  min-width: 0;
  padding-bottom: 2px;

  > svg {
    width: 100%;
    height: 24px;
  }
  &::after {
    content: "";
    display: ${props => (props.$run ? "block" : "none")};
    position: absolute;
    left: 50%;
    bottom: -2px;
    width: 3px;
    height: 3px;
    margin-left: -1px;
    border-radius: 50%;
    background: #0b0b0b;
  }
`;

const ScDockLine = styled.div`
  width: 1px;
  height: 22px;
  margin: 0 5px;
  background: #41423f;
`;
